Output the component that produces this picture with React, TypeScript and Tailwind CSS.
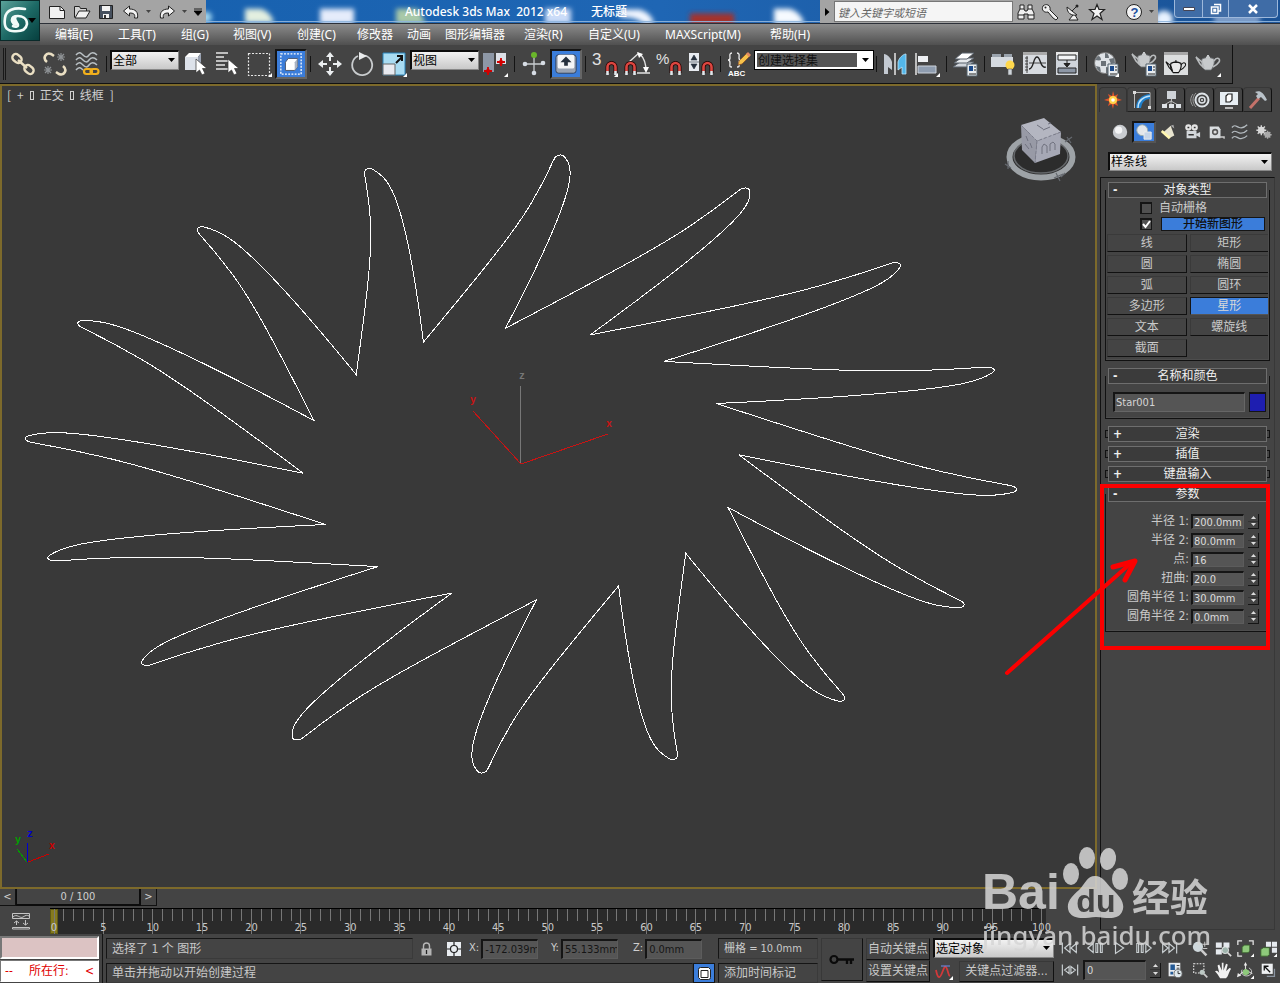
import React, { useState } from "react";

type Kids = { children: React.ReactNode };

const UI = "font-['DejaVu_Sans_Condensed','Noto_Sans','Noto_Sans_CJK_SC',sans-serif]";

/* ---------- icon helpers ---------- */

function Icon({ children, size = 26, box = 26 }: Kids & { size?: number; box?: number }) {
  return (
    <svg width={size} height={size} viewBox={`0 0 ${box} ${box}`} fill="none" aria-hidden="true" className="block shrink-0">
      {children}
    </svg>
  );
}

const Fly = () => <path d="M26 22v4h-4z" fill="#fff" />;

const Waves = ({ y = 0 }: { y?: number }) => (
  <g transform={`translate(0 ${y})`} stroke="#b9c0c4" strokeWidth="1.5" fill="none">
    <path d="M2 4c3-4 5-2 7 0s4 3 6 0 5-3 8 0" />
    <path d="M2 9c3-4 5-2 7 0s4 3 6 0 5-3 8 0" />
    <path d="M2 14c3-4 5-2 7 0s4 3 6 0 5-3 8 0" />
    <path d="M2 19c3-4 5-2 7 0" />
  </g>
);

const Magnet = () => (
  <g>
    <path d="M15.500 22v-6a4 4 0 0 1 8 0v6" stroke="#200" strokeWidth="4" />
    <path d="M15.500 20v-4a4 4 0 0 1 8 0v4" stroke="#dc4640" strokeWidth="2.600" />
    <path d="M15.500 20v4M23.500 20v4" stroke="#dfe6ea" strokeWidth="2.600" />
  </g>
);

const Teapot = ({ outline = false }: { outline?: boolean }) => (
  <g stroke={outline ? "#111" : "#6b6f72"} strokeWidth={outline ? 1.4 : 0.8} fill={outline ? "#e8e8e8" : "#c7cacc"}>
    <path d="M7 10c4-2 8-2 12 0 1 4-1 9-3 11h-6c-3-2-4-7-3-11z" />
    <path d="M7 13 1 8l4 7 4 4zM19 12c3-5 7-2 5 1s-4 4-6 5" fill="none" strokeWidth={outline ? 1.2 : 1.6} stroke={outline ? "#111" : "#b9bcbe"} />
    <path d="M11 8.500h4M13 6v2" strokeWidth={outline ? 1.2 : 2} stroke={outline ? "#111" : "#c7cacc"} />
  </g>
);

const Sheet = () => (
  <g>
    <path d="M15 13h10v12H15z" fill="#e9edf0" stroke="#53606b" />
    <path d="M17 15h4v5h-4z" fill="#1c4a8a" />
    <path d="M22 16h2M22 19h2M17 23h7" stroke="#222" />
  </g>
);

const CursorArrow = () => <path d="M14 8v14l3.500-3 2.500 5 3-1.500-2.500-5H25z" fill="#fff" stroke="#333" strokeWidth=".7" />;

const chainLink = (
  <g stroke="#eadfc3" strokeWidth="2.400">
    <rect x="2" y="4" width="10" height="7" rx="3.500" transform="rotate(40 7 7.500)" />
    <rect x="14" y="15" width="10" height="7" rx="3.500" transform="rotate(40 19 18.500)" />
    <path d="m8 9 9 8" />
  </g>
);

const unlink = (
  <g>
    <path d="M5 11C0 7 4 1 9 3l3 2M21 15c5 4 1 10-4 8l-3-2" stroke="#eadfc3" strokeWidth="2.600" />
    <path d="m16 3 6 6m0-6-6 6m3-7v8m-4-4h8M3 16l6 6m0-6-6 6m3-7v8m-4-4h8" stroke="#8d9194" strokeWidth="1.200" />
  </g>
);

const bind = (
  <g>
    <Waves />
    <rect x="10" y="18" width="8" height="5" rx="2.500" stroke="#f2b01c" strokeWidth="2.200" />
    <rect x="16.500" y="18" width="8" height="5" rx="2.500" stroke="#f2b01c" strokeWidth="2.200" />
  </g>
);

const selectObj = (
  <g>
    <path d="m3 6 4-4h12l-3 4z" fill="#fff" />
    <path d="M3 6h13v13H3z" fill="#dde2ea" />
    <path d="m16 6 3-4v12l-3 5z" fill="#9aa3b3" />
    <CursorArrow />
  </g>
);

const byName = (
  <g>
    <path d="M2 2h12M2 6h8M2 10h12M2 14h9M2 18h13" stroke="#e6e6e6" strokeWidth="1.500" />
    <CursorArrow />
  </g>
);

const rectRegion = (
  <g>
    <path d="M2.500 2.500h21v22h-21z" stroke="#e8e8e8" strokeWidth="1.200" strokeDasharray="2 1.500" />
    <Fly />
  </g>
);

const crossing = (
  <g>
    <path d="M2 2h22v22H2z" stroke="#fff" strokeWidth="1.400" strokeDasharray="2 1.500" />
    <path d="m7 11 3-4h10v9l-3 4H7z" fill="#fff" stroke="#4a5568" />
    <path d="M17 11v9l3-4V7z" fill="#aab3c2" />
  </g>
);

const move = (
  <g fill="#eceff1">
    <path d="m13 1 4 5h-3v4h-2V6H9zM13 25l4-5h-3v-4h-2v4H9zM1 13l5-4v3h4v2H6v3zM25 13l-5-4v3h-4v2h4v3z" />
  </g>
);

const rotate = (
  <g>
    <path d="M16 4.500A10 10 0 1 1 9 5" stroke="#c9ccce" strokeWidth="1.800" />
    <path d="m10 1 8 4-8 4z" fill="#e9ebec" />
  </g>
);

const scale = (
  <g>
    <path d="M2 2h22v22H2z" fill="#a9dcf2" stroke="#2b83b8" />
    <path d="M2 13h12v11H2z" fill="#e8eaf0" stroke="#666" />
    <path d="m15 12 6-6m-5-1h5v5" stroke="#111" strokeWidth="2" />
    <Fly />
  </g>
);

const pivot = (
  <g>
    <path d="M1 2h11v19H1z" fill="#8d97a6" />
    <path d="M14 2h10v11H14z" fill="#dde1e8" />
    <path d="M6 16v8M2 20h8M19 7v8M15 11h8" stroke="#d40000" strokeWidth="1.800" />
    <path d="m6 17 3 3-3 3-3-3zM19 8l3 3-3 3-3-3z" fill="#d40000" />
    <Fly />
  </g>
);

const manipulate = (
  <g>
    <path d="M13 5v16M4 13h18M13 9v8" stroke="#c9cdd0" strokeWidth="1.300" />
    <circle cx="13" cy="4" r="3" fill="#69b62a" />
    <circle cx="4" cy="13" r="2.300" fill="#d7dde5" />
    <circle cx="22" cy="12" r="2.300" fill="#d7dde5" />
    <circle cx="13" cy="22" r="2.300" fill="#d7dde5" />
  </g>
);

const keyboard = (
  <g>
    <rect x="2" y="3" width="22" height="20" rx="3" fill="#9aa4b4" stroke="#2c3e5c" />
    <rect x="4" y="3" width="18" height="15" rx="2" fill="#f4f5f7" />
    <path d="m13 5 6 6h-4v4h-4v-4H7z" fill="#26303d" />
  </g>
);

const snap3 = (
  <g>
    <text x="0" y="14" fontSize="17" fill="#e2e2e2" fontFamily="Liberation Sans">3</text>
    <Magnet />
    <Fly />
  </g>
);

const angleSnap = (
  <g>
    <path d="M5 11 15 2M16 3c4 4 6 10 6 17M13 22h13" stroke="#e2e2e2" strokeWidth="1.400" />
    <path d="m13 1 6 2-4 4zM19 16h6l-3 6z" fill="#fff" />
    <g transform="translate(-13 0)"><Magnet /></g>
  </g>
);

const percentSnap = (
  <g>
    <text x="0" y="13" fontSize="15" fill="#e2e2e2" fontFamily="Liberation Sans">%</text>
    <Magnet />
  </g>
);

const spinnerSnap = (
  <g>
    <path d="M1 2h10v18H1z" fill="#e7ebf0" />
    <path d="m3 9 3-5 3 5zM3 13h6l-3 5zM1 11h10" fill="#26303d" stroke="#26303d" strokeWidth=".6" />
    <Magnet />
  </g>
);

const namedSets = (
  <g>
    <path d="M6 2C3 2 4 5 4 7s-2 2-2 2 2 0 2 3-1 4 2 4M11 2c3 0 2 3 2 5s2 2 2 2-2 0-2 3 1 4-2 4" stroke="#ececec" strokeWidth="1.300" />
    <path d="m12 14 1-4 8-8 3 3-8 8z" fill="#f6c24b" stroke="#8a4b20" strokeWidth=".7" />
    <path d="m20 3 2-2 3 3-2 2z" fill="#e08a63" />
    <text x="2" y="25" fontSize="8" fontWeight="bold" fill="#fff" fontFamily="Liberation Sans">ABC</text>
  </g>
);

const mirror = (
  <g>
    <path d="M2 3c3 0 7 4 8 8v8L6 16v7H2z" fill="#c3c9d1" />
    <path d="M24 3c-3 0-7 4-8 8v8l4-3v7h4z" fill="#53b7ea" stroke="#bfe6fa" strokeWidth=".8" />
    <path d="M13 2v22" stroke="#fff" strokeWidth="1.300" />
  </g>
);

const align = (
  <g>
    <path d="M2 2v22" stroke="#fff" strokeWidth="1.300" />
    <path d="M4 5h10v6H4z" fill="#eef0f3" />
    <path d="M4 15h18v7H4z" fill="#8f9db0" stroke="#ccd2da" />
    <Fly />
  </g>
);

const layers = (
  <g>
    <path d="m1 16 7-5h14l-7 5z" fill="#cfd4da" stroke="#59616b" />
    <path d="m2 12 7-5h13l-7 5z" fill="#e6e9ec" stroke="#59616b" />
    <path d="m3 8 7-6h12l-7 6z" fill="#fff" stroke="#59616b" />
    <Sheet />
  </g>
);

const ribbon = (
  <g>
    <path d="M2 3h9v3H2zM14 3h8v3h-8z" fill="#9aa3ad" />
    <path d="M1 6h22v10H1z" fill="#d5dae0" />
    <circle cx="20" cy="14" r="4.500" fill="#ffd84d" />
    <path d="M18 18h4v6h-4z" fill="#cfd5da" stroke="#555" strokeWidth=".6" />
  </g>
);

const curveEd = (
  <g>
    <path d="M1 1h24v22H1z" fill="#d7dbe0" />
    <path d="M1 1h24v3H1z" fill="#aaa" />
    <path d="M7 12h17M5 5v17M3 7h3M3 10h3M3 13h3M3 16h3M3 19h3" stroke="#333" strokeWidth=".9" />
    <path d="M7 18c5 0 4-12 8-12s3 12 9 10" stroke="#222" strokeWidth="1.300" />
  </g>
);

const schematic = (
  <g>
    <path d="M2 1h22v23H2z" fill="#cfd4db" />
    <path d="M2 1h22v3H2z" fill="#e8e8e8" />
    <path d="M4 4h18v5H4z" fill="#f3f4f6" stroke="#222" />
    <path d="M4 17h18v5H4z" fill="#8d97a6" stroke="#222" />
    <path d="M13 9v4M10 12.500h6L13 16z" fill="#222" stroke="#222" />
  </g>
);

const material = (
  <g>
    <circle cx="12" cy="12" r="10.500" fill="#dfe3e7" stroke="#777" />
    <path d="M5 5c2 0 3 2 3 4-2 1-4 0-6 0zM12 2c3 0 4 3 4 5h-4zM8 10h5v5H8zM16 8l5-1 1 5-4 1zM3 15l4 1 1 5c-3-1-4-3-5-6zM13 16l5 1-2 5h-3z" fill="#6b7278" />
    <Sheet />
    <Fly />
  </g>
);

const renderSetup = (
  <g>
    <g transform="translate(0 -5)"><Teapot /></g>
    <Sheet />
  </g>
);

const frameWindow = (
  <g>
    <path d="M1 1h24v23H1z" fill="#dcdedf" />
    <path d="M1 1h24v3H1z" fill="#a8a8a8" />
    <g transform="translate(2 4) scale(.84)"><Teapot outline /></g>
  </g>
);

const render = (
  <g>
    <g transform="translate(0 -2)"><Teapot /></g>
    <Fly />
  </g>
);

/* ---------- shared controls ---------- */

function ToolButton({ label, active = false, children }: Kids & { label: string; active?: boolean }) {
  return (
    <button
      type="button"
      aria-label={label}
      aria-pressed={active}
      className={
        active
          ? "flex h-[30px] w-8 shrink-0 items-center justify-center border-2 border-[#151515] border-r-[#666] border-b-[#666] bg-[#3b7dda]"
          : "flex h-[30px] w-8 shrink-0 items-center justify-center"
      }
    >
      <Icon size={active ? 24 : 26}>{children}</Icon>
    </button>
  );
}

const Sep = () => (
  <span className="flex w-[7px] shrink-0 justify-center">
    <span className="h-4 w-px bg-[#141414]" />
  </span>
);

const ThinSep = () => (
  <span className="flex w-[6px] shrink-0 justify-center">
    <span className="h-4 w-px bg-[#141414]" />
  </span>
);

function Drop({ label, value, className, tone }: { label: string; value: string; className: string; tone?: "dark" }) {
  return (
    <span className={`relative flex shrink-0 ${className}`}>
      <select
        aria-label={label}
        defaultValue={value}
        className={
          tone === "dark"
            ? "h-full w-full appearance-none border-2 border-white bg-[#555] pl-px text-xs leading-4 text-[#111] outline outline-1 outline-black"
            : "h-full w-full appearance-none border border-t-2 border-l-2 border-[#0d0d0d] border-r-[#888] border-b-[#888] bg-linear-to-b from-[#f2f2f2] to-[#c9c9c9] pl-px text-xs leading-4 text-black"
        }
      >
        <option>{value}</option>
      </select>
      <span
        className={
          tone === "dark"
            ? "pointer-events-none absolute inset-y-0 right-0 flex w-4 items-center justify-center bg-white"
            : "pointer-events-none absolute inset-y-0 right-1 flex items-center"
        }
      >
        <svg width="7" height="4" viewBox="0 0 7 4" aria-hidden="true"><path d="M0 0h7L3.500 4z" fill="#000" /></svg>
      </span>
    </span>
  );
}

/* ---------- title, menu, toolbar ---------- */

function Logo() {
  return (
    <button type="button" aria-label="应用程序" className="flex h-[41px] w-10 shrink-0 items-center border border-[#0a2a2a] bg-linear-to-br from-[#5aa39a] via-[#1d6a66] to-[#07403f]">
      <svg width="38" height="39" viewBox="0 0 38 39" fill="none" aria-hidden="true">
        <path d="M24 8C13 6 5 9 4 17c-1 7 0 12 7 13 8 1 14-1 15-7 0-6-5-8-9-8-5 0-6 2-6 4 0 3 6 2 6 5 0 2-3 2-5 1" stroke="#f2fbf9" strokeWidth="2.600" strokeLinecap="round" />
        <path d="M10 21c-1-5 3-7 7-6-3 2-1 4 0 6 1 3-3 5-5 3z" fill="#f2fbf9" />
        <path d="M27 17h8l-4 5z" fill="#000" />
      </svg>
    </button>
  );
}

function TitleBar() {
  return (
    <div className="relative flex h-6 overflow-hidden border-b border-[#2c3038] bg-linear-to-r from-[#1560ae] via-[#1f66b4] to-[#1a5296]">
      <svg className="absolute inset-0 h-full w-full" viewBox="40 0 1240 24" preserveAspectRatio="none" aria-hidden="true">
        <defs><filter id="soft" x="-50%" y="-50%" width="200%" height="200%"><feGaussianBlur stdDeviation="2.500" /></filter></defs>
        <g filter="url(#soft)">
          <path d="M245 9h16q10 3 13 15h-29z" fill="#e3efe0" />
          <path d="M320 9h34v16h-34z" fill="#e5ecfb" />
          <path d="M396 9h22l8 16h-30z" fill="#a9c9a8" />
          <path d="M545 9h26v16h-26z" fill="#cbdcf8" />
          <path d="M620 10h20q12 4 14 15h-10q-8-8-24-7z" fill="#f2f6ff" />
          <path d="M690 14h44v12h-44z" fill="#a5302c" />
          <path d="M774 9h16q12 4 14 16h-30z" fill="#f6faff" />
          <circle cx="1164" cy="20" r="9" fill="#e8f2ff" />
          <path d="M1214 14h46v12h-46z" fill="#7d9dc9" />
          <circle cx="206" cy="18" r="6" fill="#9fd4ef" />
        </g>
        <path d="M40 22.500h1240" stroke="#8fb4dc" strokeWidth="1" />
      </svg>
      <div className="relative flex h-[23px] w-[166px] shrink-0 items-center justify-between bg-[#a4a4a4] pr-1 pl-2">
        <button type="button" aria-label="新建"><Icon size={18} box={18}><path d="M1.500 3.500h11l4 4v8h-15z" fill="#f2f2f2" stroke="#222" /><path d="M12 3.500v4h4.500" stroke="#222" /></Icon></button>
        <button type="button" aria-label="打开"><Icon size={18} box={18}><path d="M1.500 14.500v-11h5l1 2h6v3" fill="#d5d5d5" stroke="#222" /><path d="m2 15 4-7h11l-4 7z" fill="#f0f0f0" stroke="#222" /></Icon></button>
        <button type="button" aria-label="保存"><Icon size={18} box={18}><path d="M2.500 2.500h13v13h-13z" fill="#46505e" stroke="#222" /><path d="M5 3h8v5H5zM6 11h6v4H6z" fill="#f3f3f3" /><path d="M7 12h2v3H7z" fill="#333" /></Icon></button>
        <button type="button" aria-label="撤消"><Icon size={18} box={18}><path d="m1.500 8 6-5v3c6 0 9 3 8 9h-3c1-4-1-5-5-5v3z" fill="#f3f3f3" stroke="#222" /></Icon></button>
        <svg width="5" height="3" aria-hidden="true"><path d="M0 0h5L2.500 3z" fill="#444" /></svg>
        <button type="button" aria-label="重做"><Icon size={18} box={18}><path d="m16.500 8-6-5v3c-6 0-9 3-8 9h3c-1-4 1-5 5-5v3z" fill="#f3f3f3" stroke="#222" /></Icon></button>
        <svg width="5" height="3" aria-hidden="true"><path d="M0 0h5L2.500 3z" fill="#444" /></svg>
        <button type="button" aria-label="自定义快速访问"><Icon size={8} box={8}><path d="M0 1h8M0 3h8L4 7.500z" fill="#000" stroke="#000" strokeWidth=".8" /></Icon></button>
      </div>
      <div className="relative flex min-w-0 flex-1 items-center justify-center gap-6 pl-[6px] font-['Noto_Sans','Noto_Sans_CJK_SC',sans-serif] text-xs font-medium whitespace-pre text-white">
        <span>Autodesk 3ds Max  2012 x64</span>
        <span>无标题</span>
      </div>
      <div className="relative flex h-[23px] w-[338px] shrink-0 items-center bg-[#a4a4a4]">
        <button type="button" aria-label="折叠" className="flex w-[14px] justify-center"><svg width="5" height="8" aria-hidden="true"><path d="M0 0v8l4.500-4z" fill="#000" /></svg></button>
        <input aria-label="搜索" placeholder="键入关键字或短语" className="h-[21px] w-[179px] border border-[#777] bg-[#f5f5f5] pl-[3px] font-['Noto_Sans_CJK_SC',sans-serif] text-[11px] italic placeholder:text-[#666]" />
        <div className="flex flex-1 items-center justify-between pr-1 pl-1">
          <button type="button" aria-label="查找"><Icon size={18} box={18}><path d="M3 2h4v4l1 2h2l1-2V2h4v4l2 4v6h-6v-5H7v5H1v-6l2-4z" fill="#f0f0f0" stroke="#222" /><path d="M3 6h4M11 6h4M1 12h6M11 12h6" stroke="#222" /></Icon></button>
          <button type="button" aria-label="速博应用中心"><Icon size={18} box={18}><path d="M2 3c3-3 8-1 7 4l8 8-2 2-3-2-5-6C3 10 0 7 2 3z" fill="#f0f0f0" stroke="#222" /><circle cx="4.500" cy="4.500" r="1" fill="#222" /></Icon></button>
          <button type="button" aria-label="通讯中心"><Icon size={18} box={18}><path d="M3 4c0 6 4 9 10 8zM8 8l5-5M9 12l-4 5h9l-3-5" fill="#f0f0f0" stroke="#222" /><circle cx="13" cy="3" r="1.500" fill="#222" /></Icon></button>
          <button type="button" aria-label="收藏夹"><Icon size={18} box={18}><path d="m9 1.500 2 5h5.500l-4.500 4 2 6-5-3.500-5 3.500 2-6-4.500-4H7z" fill="#f4f4f4" stroke="#222" strokeWidth="1.200" /></Icon></button>
          <span className="w-2" />
          <button type="button" aria-label="帮助"><Icon size={18} box={18}><circle cx="9" cy="9" r="7.500" fill="#f4f4f4" stroke="#222" /><text x="5.500" y="13.500" fontSize="13" fontWeight="bold" fill="#1c4fa0" fontFamily="Liberation Sans">?</text></Icon></button>
          <svg width="5" height="3" aria-hidden="true"><path d="M0 0h5L2.500 3z" fill="#444" /></svg>
        </div>
      </div>
      <div className="relative flex shrink-0 pr-[2px] pl-4">
        <div className="flex h-[18px] divide-x divide-[#9db8db] rounded-b border border-t-0 border-[#9db8db] bg-[#3f6ca6]">
          <button type="button" aria-label="最小化" className="flex w-7 items-center justify-center"><svg width="12" height="4"><path d="M.5.500h11v3H.5z" fill="#fff" stroke="#445" /></svg></button>
          <button type="button" aria-label="还原" className="flex w-[26px] items-center justify-center"><svg width="12" height="12" fill="none"><path d="M4 1.500h6.500V8H8M1.500 4h6.500v6.500H1.500zM4 6.500h1.500V8H4z" stroke="#fff" strokeWidth="1.500" /></svg></button>
          <button type="button" aria-label="关闭" className="flex w-12 items-center justify-center"><svg width="12" height="10"><path d="m2 1 8 8m0-8L2 9" stroke="#fff" strokeWidth="2.500" /></svg></button>
        </div>
      </div>
    </div>
  );
}

const menus: [string, string][] = [
  ["编辑(E)", "w-[63px]"], ["工具(T)", "w-[63px]"], ["组(G)", "w-[52px]"], ["视图(V)", "w-[64px]"], ["创建(C)", "w-[60px]"],
  ["修改器", "w-[50px]"], ["动画", "w-[38px]"], ["图形编辑器", "w-[79px]"], ["渲染(R)", "w-[64px]"], ["自定义(U)", "w-[77px]"],
  ["MAXScript(M)", "w-[105px]"], ["帮助(H)", "w-[64px]"],
];

function MenuBar() {
  return (
    <nav className="flex h-[21px] items-center bg-linear-to-b from-[#8c8c8c] to-[#505050] pl-[15px] font-['Noto_Sans','Noto_Sans_CJK_SC',sans-serif] text-xs text-white">
      {menus.map(([m, w]) => (
        <button key={m} type="button" className={`${w} shrink-0 text-left leading-5 whitespace-nowrap`}>{m}</button>
      ))}
    </nav>
  );
}

function Toolbar() {
  return (
    <div className="flex h-[39px] bg-[#444]">
      <div className="flex items-center border-r border-b border-[#111] pr-2 pl-[3px]">
        <span className="mr-px h-8 w-[3px] shrink-0 border-x border-[#181818]" />
        <ToolButton label="选择并链接">{chainLink}</ToolButton>
        <ToolButton label="断开当前选择链接">{unlink}</ToolButton>
        <ToolButton label="绑定到空间扭曲">{bind}</ToolButton>
        <Sep />
        <Drop label="选择过滤器" value="全部" className="mb-2 h-5 w-[69px]" />
        <ToolButton label="选择对象">{selectObj}</ToolButton>
        <ToolButton label="按名称选择">{byName}</ToolButton>
        <ToolButton label="矩形选择区域">{rectRegion}</ToolButton>
        <ToolButton label="窗口/交叉" active>{crossing}</ToolButton>
        <Sep />
        <ToolButton label="选择并移动">{move}</ToolButton>
        <ToolButton label="选择并旋转">{rotate}</ToolButton>
        <ToolButton label="选择并缩放">{scale}</ToolButton>
        <Drop label="参考坐标系" value="视图" className="mb-2 h-5 w-[69px]" />
        <ToolButton label="使用轴点中心">{pivot}</ToolButton>
        <Sep />
        <ToolButton label="选择并操纵">{manipulate}</ToolButton>
        <ToolButton label="键盘快捷键覆盖切换" active>{keyboard}</ToolButton>
        <Sep />
        <ToolButton label="捕捉开关">{snap3}</ToolButton>
        <ToolButton label="角度捕捉切换">{angleSnap}</ToolButton>
        <ToolButton label="百分比捕捉切换">{percentSnap}</ToolButton>
        <ToolButton label="微调器捕捉切换">{spinnerSnap}</ToolButton>
        <ThinSep />
        <ToolButton label="编辑命名选择集">{namedSets}</ToolButton>
        <Drop label="命名选择集" value="创建选择集" tone="dark" className="mb-2 h-[18px] w-[118px]" />
        <ThinSep />
        <ToolButton label="镜像">{mirror}</ToolButton>
        <ToolButton label="对齐">{align}</ToolButton>
        <ThinSep />
        <ToolButton label="层管理器">{layers}</ToolButton>
        <ThinSep />
        <ToolButton label="石墨建模工具">{ribbon}</ToolButton>
        <ToolButton label="曲线编辑器">{curveEd}</ToolButton>
        <ToolButton label="图解视图">{schematic}</ToolButton>
        <Sep />
        <ToolButton label="材质编辑器">{material}</ToolButton>
        <ThinSep />
        <ToolButton label="渲染设置">{renderSetup}</ToolButton>
        <ToolButton label="渲染帧窗口">{frameWindow}</ToolButton>
        <ToolButton label="渲染产品">{render}</ToolButton>
      </div>
    </div>
  );
}

/* ---------- viewport ---------- */

const CENTER = [521, 464];
const AXIS_A = [-15, -136];
const AXIS_B = [218, -9];
const POINTS = 16;

// Cubic segments of one arm: start vertex, then three control points per segment.
const ARM: number[][] = [
  [506, 328],
  [590, 284], [665, 245], [700, 219],
  [721, 205], [732, 195], [741, 189],
  [746, 187], [750, 188], [750, 192],
  [750, 199], [748, 203], [743, 210],
  [732, 225], [700, 255], [590, 335],
];

function starPath() {
  const det = AXIS_A[0] * AXIS_B[1] - AXIS_B[0] * AXIS_A[1];
  const local = ARM.map(([px, py]) => {
    const x = px - CENTER[0];
    const y = py - CENTER[1];
    return [(x * AXIS_B[1] - y * AXIS_B[0]) / det, (y * AXIS_A[0] - x * AXIS_A[1]) / det];
  });
  let d = "";
  for (let k = 0; k < POINTS; k++) {
    const t = (k * 2 * Math.PI) / POINTS;
    const c = Math.cos(t);
    const s = Math.sin(t);
    const pts = local.map(([a, b]) => {
      const ra = a * c - b * s;
      const rb = a * s + b * c;
      return `${(CENTER[0] + ra * AXIS_A[0] + rb * AXIS_B[0]).toFixed(1)} ${(CENTER[1] + ra * AXIS_A[1] + rb * AXIS_B[1]).toFixed(1)}`;
    });
    d += (k === 0 ? `M${pts[0]}` : "") + "C" + pts.slice(1).join(" ");
  }
  return d + "Z";
}

function ViewCube() {
  return (
    <svg className="absolute top-[30px] right-4 h-[70px] w-[76px]" viewBox="0 0 76 70" fill="none" aria-label="ViewCube">
      <ellipse cx="38" cy="41" rx="31.500" ry="20.500" fill="#2c2c2c" stroke="#9ea3a7" strokeWidth="6" />
      <ellipse cx="38" cy="40" rx="27" ry="17" stroke="#65686b" strokeWidth="1.500" />
      <path d="m18 9 23-7 17 14-24 9z" fill="#b4b6c1" />
      <path d="m18 9 16 16-2 22-13-13z" fill="#989aa6" />
      <path d="m34 25 24-9-1 22-25 9z" fill="#a6a8b5" />
      <path d="m18 9 16 16 24-9M34 25l-2 22" stroke="#7b7d8c" strokeDasharray="3 2" />
      <path d="M34 9l6 4M40 14l7-3M45 8l3-1M39 38v-7l2-3 3 2v7M47 35v-7l3-2 2 2v6M23 20l2 5M22 28l4 5M27 27l2 5" stroke="#70727f" />
      <path d="m2 48 6 4M5 45v8M62 26l7-5M64 21l4 6M51 62l9-4M53 57l4 8M58 61l4-4" stroke="#65696f" strokeWidth="1.200" />
    </svg>
  );
}

function Viewport() {
  return (
    <main className="relative min-h-[500px] flex-1 border-2 border-[#7d6a2b] bg-[#393939]">
      <svg className="absolute inset-0 h-full w-full" viewBox="2 86 1093 801" fill="none" role="img" aria-label="Star001">
        <path d={starPath()} stroke="#fff" strokeWidth="1" shapeRendering="crispEdges" />
        <g shapeRendering="crispEdges">
          <path d="M520.500 464v-78" stroke="#777" />
          <path d="M521 464 608 434M521 464 473 411" stroke="#c81414" />
          <path d="M27.500 862v-19" stroke="#0000d0" />
          <path d="m28 862 21-8" stroke="#c00" />
          <path d="m27 862-10-13" stroke="#00a000" />
        </g>
        <g fontFamily="Liberation Mono" fontSize="10" fontWeight="bold">
          <text x="519" y="379" fill="#777">z</text>
          <text x="606" y="427" fill="#c81414">x</text>
          <text x="470" y="403" fill="#c81414">y</text>
          <text x="27" y="837" fill="#0000d0">z</text>
          <text x="49" y="849" fill="#c00">x</text>
          <text x="15" y="843" fill="#00a000">y</text>
        </g>
      </svg>
      <div className="relative flex gap-[6px] pl-[5px] font-['Noto_Sans_CJK_SC',sans-serif] text-xs leading-[18px] text-[#cfcfcf]">
        <span>[</span>
        <span>+</span>
        <span className="mt-[5px] h-[9px] w-1 border border-[#cfcfcf]" />
        <span>正交</span>
        <span className="mt-[5px] h-[9px] w-1 border border-[#cfcfcf]" />
        <span>线框</span>
        <span>]</span>
      </div>
      <ViewCube />
    </main>
  );
}

function TimeSlider() {
  return (
    <div className="flex h-[19px] items-start text-[11px] text-[#d0d0d0]">
      <button type="button" aria-label="上一帧" className="h-[17px] w-4 border-r border-b border-[#111] leading-4">&lt;</button>
      <button type="button" className="h-[17px] w-[125px] border-r-2 border-b-2 border-l border-[#0c0c0c] leading-4">0 / 100</button>
      <button type="button" aria-label="下一帧" className="h-[17px] w-4 border-r border-b border-[#111] leading-4">&gt;</button>
    </div>
  );
}

const frames = Array.from({ length: 101 }, (_, i) => i);

function TrackBar() {
  return (
    <div className="flex h-[26px]">
      <button type="button" aria-label="打开迷你曲线编辑器" className="flex w-[50px] items-center justify-center pr-2">
        <svg width="20" height="18" fill="none" stroke="#c4c4c4" aria-hidden="true">
          <path d="M1.500 1.500h17v5h-17zM2 5c4-4 7 2 10 0s4-2 6-1M1.500 15.500h17v1.500h-17zM5.500 13V9M3 11l2.500-2L8 11M14.500 8v5M12 11l2.500 2 2.500-2" />
        </svg>
      </button>
      <div className="relative mr-[51px] flex flex-1 justify-between border-t border-black bg-[#2a2a2a] pr-1 pl-1">
        <span className="absolute top-0 left-0 h-full w-2 border border-[#5f5a15] bg-[#857a1e]" />
        {frames.map((f) => (
          <span key={f} className="relative flex w-0 justify-center text-[11px] text-[#c9c9c9]">
            {f % 5 === 0 ? <span className="h-full w-px shrink-0 bg-[#777]" /> : <span className="h-3 w-px shrink-0 bg-[#777]" />}
            {f % 5 === 0 && <span className="absolute top-3 leading-[14px]">{f}</span>}
          </span>
        ))}
      </div>
    </div>
  );
}

/* ---------- command panel ---------- */

const tabIcons: [string, React.ReactNode][] = [
  ["创建", <g><path d="m10 1 1.500 5L15 4l-1.500 4L19 10l-5.500 1.500L15 16l-4-2-1 5-1.500-5L5 16l1.500-4.500L1 10l5.500-2L5 4l4 2z" fill="#e0542b" /><circle cx="10" cy="10" r="4" fill="#ffd54a" /><circle cx="10" cy="10" r="1.800" fill="#fff" /></g>],
  ["修改", <g><path d="M2.500 18V2.500H18V18" stroke="#bbb" /><path d="M4 18C4 10 9 5 18 4v5c-5 0-8 3-9 9z" fill="#1f7fcb" /><path d="M6 18C6 11 11 7 18 6" stroke="#bfe3fb" strokeWidth="1.500" /><path d="M1 1h3v3H1zM16 16h3v3h-3z" fill="#ddd" /></g>],
  ["层次", <g><path d="M6 1h9v8H6z" fill="#cfd3d8" /><path d="M10.500 9v3M3 15l7-4 7 4M10 11v4" stroke="#bbb" /><path d="M1 14h5v4H1zM8 14h5v4H8zM15 14h5v4h-5z" fill="#dfe3e7" /></g>],
  ["运动", <g><circle cx="12" cy="10" r="6.500" stroke="#dfe4e8" strokeWidth="2" /><circle cx="12" cy="10" r="3" stroke="#dfe4e8" strokeWidth="1.500" /><circle cx="12" cy="10" r="1" fill="#dfe4e8" /><path d="M6 3C2 7 2 13 6 17M3 4C0 8 0 12 3 16" stroke="#999" /></g>],
  ["显示", <g><path d="M1 2h18v13H1z" fill="#e7eef3" /><path d="m7 6 2-2h4v6l-2 2H7z" stroke="#222" strokeWidth="1.200" fill="#fff" /><path d="M6 17h8v2H6z" fill="#bbb" /></g>],
  ["实用程序", <g><path d="m2 18 9-10" stroke="#c4726a" strokeWidth="3" /><path d="M7 2c5-2 8 0 12 8l-2 1-4-4-3 2-2-3 2-2z" fill="#b9c2c9" /></g>],
];

const catIcons: [string, React.ReactNode][] = [
  ["几何体", <g><circle cx="10" cy="10" r="8" fill="#c9ccd0" /><circle cx="8.500" cy="8" r="4" fill="#f4f5f6" /></g>],
  ["图形", <g><circle cx="8" cy="8" r="6" fill="#e3e6ea" stroke="#9aa" /><path d="M10 10h8v8h-8z" fill="#c5d4e8" stroke="#eee" /></g>],
  ["灯光", <g><path d="m4 11 9-8 4 11-6 3z" fill="#e8e4cf" /><path d="M3 9l9 8" stroke="#fff6b0" strokeWidth="3" /><path d="m13 3 3-1 1 4" fill="#aaa" /></g>],
  ["摄影机", <g><circle cx="6" cy="5" r="3.500" fill="#e5e5e5" /><circle cx="13" cy="5" r="3.500" fill="#e5e5e5" /><path d="M4 9h11v8H4zM15 12l4-2v6l-4-2z" fill="#d4d8dc" /><path d="M5 5h2M12 5h2M6 13h6" stroke="#333" strokeWidth="1.500" /></g>],
  ["辅助对象", <g><path d="M3 4h10l2 3v10H3z" fill="#d9dde0" /><circle cx="9" cy="10" r="3.500" fill="#555" /><circle cx="9" cy="10" r="1.800" fill="#ddd" /><path d="M14 15.500h5v2" stroke="#ccc" strokeWidth="1.500" /></g>],
  ["空间扭曲", <g stroke="#b4bbc0" strokeWidth="1.400"><path d="M1 5c3-4 5-1 8 0s6 0 9-3M1 11c3-4 5-1 8 0s6 0 9-3M1 17c3-4 5-1 8 0s6 0 9-3" /></g>],
  ["系统", <g stroke="#d8d8d8" strokeWidth="1.500"><circle cx="7" cy="8" r="3" fill="#ddd" /><path d="M7 2.500v11M1.500 8h11M3 4l8 8M11 4l-8 8" /><circle cx="14" cy="13" r="2.500" fill="#aaa" stroke="#aaa" /><path d="M14 8.500v9M9.500 13h9M11 10l6 6M17 10l-6 6" stroke="#aaa" /></g>],
];

function Header({ title, open = false }: { title: string; open?: boolean }) {
  return (
    <button type="button" aria-expanded={open} className="relative mx-[3px] flex h-4 items-center justify-center border border-[#6e6e6e] bg-[#3b3b3b] text-xs leading-[14px] text-[#f0f0f0]">
      <span className="absolute left-1 font-bold">{open ? "-" : "+"}</span>
      {title}
    </button>
  );
}

function Group({ title, children }: Kids & { title: string }) {
  return (
    <section className="relative flex flex-col">
      <div className="pointer-events-none absolute inset-x-0 top-2 bottom-0 border border-t-0 border-[#111] shadow-[inset_-1px_-1px_0_#4d4d4d]" />
      <Header title={title} open />
      {children}
    </section>
  );
}

function Closed({ title }: { title: string }) {
  return (
    <section className="relative flex flex-col">
      <div className="absolute inset-x-0 inset-y-1 border border-[#111]" />
      <Header title={title} />
    </section>
  );
}

const shapes = ["线", "矩形", "圆", "椭圆", "弧", "圆环", "多边形", "星形", "文本", "螺旋线", "截面"];

const params: [string, string][] = [
  ["半径 1:", "200.0mm"], ["半径 2:", "80.0mm"], ["点:", "16"], ["扭曲:", "20.0"], ["圆角半径 1:", "30.0mm"], ["圆角半径 2:", "0.0mm"],
];

function Spinner() {
  return (
    <span className="flex h-[15px] w-[11px] shrink-0 flex-col border-r border-b border-[#151515]">
      <button type="button" aria-label="增加" className="flex flex-1 items-center justify-center border-b border-[#333]"><svg width="5" height="3"><path d="M0 3h5L2.500 0z" fill="#ddd" /></svg></button>
      <button type="button" aria-label="减少" className="flex flex-1 items-center justify-center"><svg width="5" height="3"><path d="M0 0h5L2.500 3z" fill="#ddd" /></svg></button>
    </span>
  );
}

function CommandPanel() {
  const [shape, setShape] = useState("星形");
  return (
    <aside className="flex w-[183px] shrink-0 flex-col pt-[3px] pb-1 pl-[2px]">
      <div className="flex h-[25px]">
        {tabIcons.map(([label, icon], i) => (
          <button
            key={label}
            type="button"
            aria-label={label}
            className={
              i === 0
                ? "flex w-[28px] items-center justify-center rounded-t border border-b-0 border-[#333]"
                : "flex w-[29px] items-center justify-center rounded-t border border-[#383838] border-r-[#111] border-b-[#222]"
            }
          >
            <Icon size={20} box={20}>{icon}</Icon>
          </button>
        ))}
      </div>
      <div className="flex h-[40px] items-center pl-[9px]">
        {catIcons.map(([label, icon], i) => (
          <button
            key={label}
            type="button"
            aria-label={label}
            className={
              i === 1
                ? "flex h-[22px] w-6 items-center justify-center border-2 border-[#151515] border-r-[#555] border-b-[#555] bg-[#3b7dda]"
                : "flex h-[22px] w-6 items-center justify-center"
            }
          >
            <Icon size={18} box={20}>{icon}</Icon>
          </button>
        ))}
      </div>
      <Drop label="图形类别" value="样条线" className="mr-2 ml-[9px] h-[19px]" />
      <div className="mt-[6px] mr-[5px] ml-px flex flex-1 flex-col border border-[#111] border-r-[#383838] border-b-[#383838] px-1 pt-1">
        <Group title="对象类型">
          <div className="flex flex-col pt-[2px] text-xs leading-4 text-[#c9c9c9]">
            <label className="flex h-4 items-center gap-[7px] pl-[35px]">
              <input type="checkbox" className="h-3 w-3 appearance-none border border-t-2 border-l-2 border-[#151515] bg-[#505050]" />
              自动栅格
            </label>
            <label className="flex h-4 items-center gap-[9px] pl-[35px] text-[#111]">
              <span className="relative flex h-3 w-3">
                <input type="checkbox" defaultChecked className="h-3 w-3 appearance-none border border-t-2 border-l-2 border-[#151515] bg-[#505050]" />
                <svg className="pointer-events-none absolute inset-0" width="12" height="12" fill="none" aria-hidden="true"><path d="m3 6 2.500 3L10 3" stroke="#fff" strokeWidth="2" /></svg>
              </span>
              <span className="mr-[5px] h-[14px] flex-1 border border-[#151515] bg-[#3b7dda] text-center leading-[13px] font-medium">开始新图形</span>
            </label>
          </div>
          <div className="grid grid-cols-2 gap-[3px] pt-[2px] pr-px pb-1 pl-[2px]">
            {shapes.map((s) => (
              <button
                key={s}
                type="button"
                onClick={() => setShape(s)}
                aria-pressed={s === shape}
                className={
                  s === shape
                    ? "h-[18px] border border-[#151515] border-r-[#555] border-b-[#555] bg-[#3b7dda] text-xs leading-4 text-[#d8d8d8]"
                    : "h-[18px] border border-[#3a3a3a] border-r-[#111] border-b-[#111] text-xs leading-4 text-[#c9c9c9]"
                }
              >
                {s}
              </button>
            ))}
          </div>
        </Group>
        <div className="h-[7px]" />
        <Group title="名称和颜色">
          <div className="flex h-[35px] items-center gap-1 pr-1 pl-2">
            <input aria-label="名称" defaultValue="Star001" className="h-5 w-[132px] border border-t-2 border-l-2 border-[#151515] border-r-[#666] border-b-[#666] bg-[#555] pl-px text-[11px] text-[#d4d4d4]" />
            <button type="button" aria-label="对象颜色" className="h-5 w-[17px] border border-t-2 border-[#151515] bg-[#1e1eb0]" />
          </div>
        </Group>
        <div className="h-[7px]" />
        <div className="flex flex-col gap-1">
          <Closed title="渲染" />
          <Closed title="插值" />
          <Closed title="键盘输入" />
          <div className="relative">
            <Group title="参数">
              <div className="flex flex-col gap-1 pt-3 pr-[11px] pb-2">
                {params.map(([label, value]) => (
                  <label key={label} className="flex h-[15px] items-center justify-end gap-[2px] text-xs text-[#c9c9c9]">
                    <span className="leading-[15px]">{label}</span>
                    <input defaultValue={value} className="mr-[2px] h-[15px] w-[53px] border border-t-2 border-l-2 border-[#151515] border-r-[#5c5c5c] border-b-[#5c5c5c] bg-[#555] pl-px text-[11px] text-[#dcdcdc]" />
                    <Spinner />
                  </label>
                ))}
              </div>
            </Group>
            <div className="pointer-events-none absolute -top-[2px] right-0 -bottom-[18px] -left-[5px] border-4 border-[#fb0000]" />
            <svg className="pointer-events-none absolute top-[70px] -left-[101px]" width="134" height="124" fill="none" aria-hidden="true">
              <path d="M3 117 127 7" stroke="#fb0000" strokeWidth="4" strokeLinecap="round" />
              <path d="m109 11 22-6-10 19" stroke="#fb0000" strokeWidth="5" strokeLinecap="round" strokeLinejoin="round" />
            </svg>
          </div>
        </div>
      </div>
    </aside>
  );
}

/* ---------- status bar ---------- */

function Coord({ axis, value }: { axis: string; value: string }) {
  return (
    <label className="flex w-[82px] shrink-0 items-center gap-[2px] text-[11px] text-[#cfcfcf]">
      {axis}:
      <input defaultValue={value} className="h-5 w-[57px] border border-t-2 border-l-2 border-[#151515] border-r-[#5c5c5c] border-b-[#5c5c5c] bg-[#555] pl-[2px] text-[11px] text-[#151515]" />
    </label>
  );
}

const flat = "border border-[#151515] border-r-[#3a3a3a] border-b-[#3a3a3a]";
const raised = "border border-[#383838] border-r-[#111] border-b-[#111]";

const playIcons: [string, React.ReactNode][] = [
  ["转至开头", <path d="M1.500 4v12M10 5l-6 5 6 5zM17 5l-6 5 6 5z" />],
  ["上一帧", <path d="M8 5l-6 5 6 5zM11 5h2v10h-2zM16 5h2v10h-2z" />],
  ["播放动画", <path d="M5 4l9 6-9 6z" />],
  ["下一帧", <path d="M12 5l6 5-6 5zM2 5h2v10H2zM7 5h2v10H7z" />],
  ["转至结尾", <path d="M18.500 4v12M3 5l6 5-6 5zM10 5l6 5-6 5z" />],
];

const navIcons: [string, React.ReactNode][] = [
  ["缩放", <g><circle cx="7" cy="8" r="6" fill="#cfd8dc" /><path d="m11 12 6 6" stroke="#ccc" strokeWidth="3" /><path d="M15 2v6M12 5h6M13 10h5" stroke="#ddd" /></g>],
  ["缩放所有视图", <g><path d="M1 3h7v6H1zM10 3h7v6h-7zM1 11h7v6H1z" fill="#e5e9ee" /><circle cx="12" cy="12" r="4" fill="#9fb4ad" stroke="#eee" /><path d="m15 15 4 4" stroke="#ddd" strokeWidth="2" /></g>],
  ["最大化显示选定对象", <g><path d="M1 6V1h5M14 1h5v5M1 14v5h5" stroke="#e5e5e5" strokeWidth="1.500" /><path d="m6 8 3-2h6v7l-2 2H6z" fill="#8ec97b" stroke="#38612b" /><path d="M20 16v4h-4z" fill="#fff" /></g>],
  ["所有视图最大化显示", <g><path d="M7 2h6v6H7zM14 2h6v6h-6zM14 9h6v6h-6z" fill="#e5e9ee" /><path d="m1 11 3-2h7v8l-2 2H1z" fill="#8ec97b" stroke="#38612b" /><path d="M20 16v4h-4z" fill="#fff" /></g>],
  ["缩放区域", <g><path d="M2 2h12v11H2z" stroke="#eee" strokeDasharray="2 1.500" strokeWidth="1.300" /><circle cx="12" cy="12" r="3" fill="#bcc8c4" /><path d="m14 14 4 4" stroke="#ccc" strokeWidth="2" /></g>],
  ["平移视图", <g><path d="M6 19c-2-3-4-6-6-8 2-2 4 0 5 2L3 4l2-1 3 7V1h2v9l3-8 2 1-2 8 4-4 2 1c-3 4-3 9-6 11z" fill="#f2f2f2" /></g>],
  ["环绕子对象", <g><path d="M10 2v7L2 16M10 9l8 5" stroke="#ddd" strokeWidth="1.300" /><path d="M6 9a6 5 0 1 0 8-2" stroke="#ddd" /><path d="m10 8 4 2v4l-4 2-3-2v-4z" fill="#8ec97b" /><path d="m8 4 2-4 2 4zM0 18l1-5 4 3z" fill="#eee" /><path d="M20 16v4h-4z" fill="#fff" /></g>],
  ["最大化视口切换", <g><path d="M2 2h13v12H2z" fill="#eef0f2" /><path d="m5 5 7 7M5 10V5h5" stroke="#111" strokeWidth="1.500" /><path d="M17 8v9H8" stroke="#8a94a0" strokeWidth="1.500" /></g>],
];

function StatusBar() {
  return (
    <footer className="flex h-[49px] gap-[3px] bg-[#444] text-xs text-[#c9c9c9]">
      <div className="flex w-[99px] shrink-0 flex-col gap-px pt-[2px]">
        <div className="h-[23px] border-2 border-[#777] border-r-white border-b-white bg-[#dcc3c3]" />
        <div className="flex h-[22px] justify-between border border-[#777] border-r-white border-b-white bg-white pr-1 pl-1 leading-5 text-[#e00000]">
          <span>-- </span><span>所在行:</span><span>&lt;</span>
        </div>
      </div>
      <div className="flex min-w-0 flex-1 flex-col gap-1 border-l border-[#151515] pt-1 pl-[3px]">
        <div className="flex h-[21px] items-center">
          <div className={`h-[21px] min-w-0 flex-1 pl-[5px] leading-[20px] ${flat}`}>选择了 1 个 图形</div>
          <button type="button" aria-label="选择锁定切换" className="mx-2 flex w-[11px] justify-center">
            <svg width="11" height="14" fill="none" aria-hidden="true"><path d="M2.500 7V4a3 3 0 0 1 6 0v3" stroke="#b8b8b8" strokeWidth="1.400" /><path d="M.5 6.500h10v7H.5z" fill="#b5b5b5" /><path d="M5.500 8v4" stroke="#222" strokeWidth="1.300" /></svg>
          </button>
          <button type="button" aria-label="绝对模式变换输入" className="mr-2 ml-[7px]">
            <svg width="14" height="14" fill="none" aria-hidden="true"><path d="M0 0h14v14H0z" fill="#e9edf1" /><circle cx="7" cy="7" r="3.500" stroke="#222" strokeWidth="1.200" /><path d="M7 0v4M7 10v4M0 7h4M10 7h4" stroke="#222" strokeWidth="1.200" /></svg>
          </button>
          <Coord axis="X" value="-172.039mm" />
          <Coord axis="Y" value="55.133mm" />
          <Coord axis="Z" value="0.0mm" />
        </div>
        <div className="flex h-[20px]">
          <div className={`h-5 min-w-0 flex-1 pl-[5px] leading-[19px] ${flat}`}>单击并拖动以开始创建过程</div>
          <button type="button" aria-label="孤立当前选择" className="flex h-5 w-[22px] items-center justify-center border border-[#151515] bg-[#3b7dda]">
            <svg width="15" height="15" fill="none" aria-hidden="true"><path d="M1.500 3.500q0-2 2-2h8l2 2v8q0 2-2 2h-8l-2-2z" fill="#fff" stroke="#222" /><path d="M4 4.500h7v7H4z" fill="#fff" stroke="#222" /></svg>
          </button>
        </div>
      </div>
      <div className="flex w-[100px] shrink-0 flex-col gap-1 pt-1">
        <div className={`h-[21px] pl-[5px] text-[11px] leading-[20px] ${flat}`}>栅格 = 10.0mm</div>
        <div className={`h-5 pl-[5px] leading-[19px] ${flat}`}>添加时间标记</div>
      </div>
      <button type="button" aria-label="设置关键点" className={`my-1 flex h-[43px] w-[42px] shrink-0 items-center justify-center ${raised}`}>
        <svg width="26" height="12" fill="none" aria-hidden="true"><circle cx="5" cy="5.500" r="3.500" stroke="#0a0a0a" strokeWidth="2.200" /><path d="M9 5.500h16M18 6v4M22 6v4" stroke="#0a0a0a" strokeWidth="2.400" /></svg>
      </button>
      <div className="flex w-[64px] shrink-0 flex-col pt-1">
        <button type="button" className={`h-[22px] leading-5 whitespace-nowrap ${raised}`}>自动关键点</button>
        <button type="button" className={`h-[22px] leading-5 whitespace-nowrap ${raised}`}>设置关键点</button>
      </div>
      <div className="flex w-[121px] shrink-0 flex-col gap-[3px] pt-1">
        <Drop label="选定对象" value="选定对象" className="h-5" />
        <div className="flex">
          <button type="button" aria-label="新建关键点的默认切线" className="w-[26px]">
            <svg width="22" height="18" fill="none" aria-hidden="true"><path d="M3 7c2 10 4 8 6 3s3-9 5-4 1 6 3 7" stroke="#d2393a" strokeWidth="1.800" /><path d="M8 3h9" stroke="#6d8ff0" /><path d="M20 13v4h-4z" fill="#fff" /></svg>
          </button>
          <button type="button" className={`h-[21px] flex-1 leading-[19px] ${raised}`}>关键点过滤器...</button>
        </div>
      </div>
      <div className="flex w-[129px] shrink-0 flex-col pt-[3px] pl-1">
        <div className="flex h-[22px] items-center justify-between pr-2">
          {playIcons.map(([label, icon]) => (
            <button key={label} type="button" aria-label={label}><Icon size={18} box={20}><g stroke="#c9cfd2" strokeWidth="1.300">{icon}</g></Icon></button>
          ))}
        </div>
        <div className="flex h-[22px] items-center gap-1">
          <button type="button" aria-label="关键点模式切换"><Icon size={18} box={20}><path d="M1.500 4v12M18.500 4v12M9 6l-5 4 5 4zM11 6l5 4-5 4z" stroke="#c9cfd2" strokeWidth="1.300" /></Icon></button>
          <input aria-label="当前帧" defaultValue="0" className="h-5 w-[63px] border border-t-2 border-l-2 border-[#151515] border-r-[#5c5c5c] border-b-[#5c5c5c] bg-[#555] pl-[2px] text-[11px] text-[#d8d8d8]" />
          <Spinner />
          <button type="button" aria-label="时间配置"><Icon size={18} box={20}><path d="M4 2h13v15H4z" fill="#e7ebef" /><path d="M6 4h5v6H6zM6 12h3v3H6z" fill="#245a96" /><path d="M13 5h3M13 8h3" stroke="#333" /><circle cx="14.500" cy="14" r="4.500" fill="#dfe9ee" stroke="#666" /><path d="M14.500 11v3h2.500" stroke="#222" /></Icon></button>
        </div>
      </div>
      <div className="grid w-[91px] shrink-0 grid-cols-4 grid-rows-2 pt-[3px] pb-[2px]">
        {navIcons.map(([label, icon]) => (
          <button key={label} type="button" aria-label={label} className="flex items-center justify-center"><Icon size={17} box={20}>{icon}</Icon></button>
        ))}
      </div>
    </footer>
  );
}

function Watermark() {
  return (
    <div className="pointer-events-none absolute right-[72px] bottom-[31px] w-[226px] text-[#d6d6d6] opacity-85">
      <div className="relative flex h-[72px] items-end justify-between">
        <span className="font-['Liberation_Sans',sans-serif] text-[50px] leading-[52px] font-bold">Bai</span>
        <span className="relative flex h-[72px] w-[68px] items-end justify-center">
          <svg className="absolute -top-[2px] left-0" width="68" height="74" viewBox="0 0 68 74" fill="currentColor" aria-hidden="true">
            <ellipse cx="9" cy="30" rx="8" ry="11" />
            <ellipse cx="25" cy="14" rx="8" ry="11" />
            <ellipse cx="46" cy="15" rx="8" ry="11" transform="rotate(8 46 15)" />
            <ellipse cx="58" cy="35" rx="8" ry="11" />
            <path d="M33 32c8 0 11 7 17 13 8 7 14 15 10 23-4 8-14 6-26 5-12 1-22 3-27-5-4-9 3-16 10-22 6-6 8-14 16-14z" />
          </svg>
          <span className="relative font-['Liberation_Sans',sans-serif] text-[32px] leading-[34px] font-bold text-[#444]">du</span>
        </span>
        <span className="font-['Noto_Sans_CJK_SC',sans-serif] text-[38px] leading-[46px] font-bold">经验</span>
      </div>
      <div className="font-['Noto_Sans',sans-serif] text-[26px] leading-[34px] font-medium whitespace-nowrap">jingyan.baidu.com</div>
    </div>
  );
}

export default function App() {
  return (
    <div className={`relative flex min-h-screen flex-col overflow-hidden bg-[#444] ${UI}`}>
      <header>
        <div className="flex bg-[#4f4f4f]">
          <Logo />
          <div className="min-w-0 flex-1">
            <TitleBar />
            <MenuBar />
          </div>
        </div>
        <Toolbar />
      </header>
      <div className="flex flex-1">
        <div className="flex min-w-0 flex-1 flex-col">
          <Viewport />
          <TimeSlider />
          <TrackBar />
        </div>
        <CommandPanel />
      </div>
      <StatusBar />
      <Watermark />
    </div>
  );
}
